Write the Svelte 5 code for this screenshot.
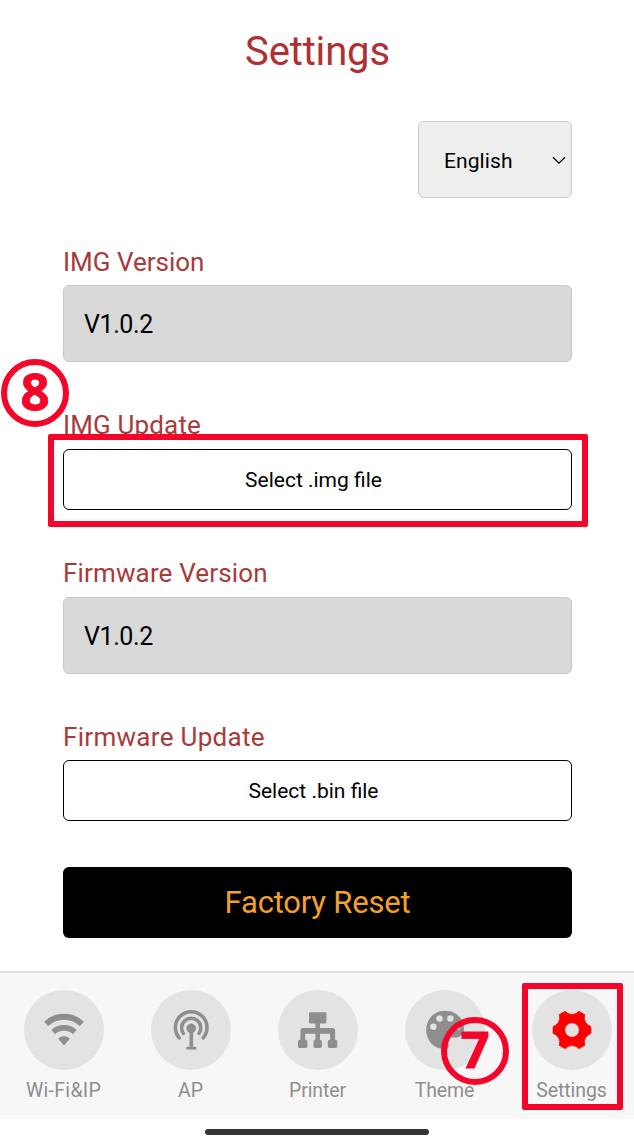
<script>
  const sections = [
    { kind: 'version', label: 'IMG Version', text: 'V1.0.2' },
    { kind: 'update', label: 'IMG Update', text: 'Select .img file' },
    { kind: 'version', label: 'Firmware Version', text: 'V1.0.2' },
    { kind: 'update', label: 'Firmware Update', text: 'Select .bin file' }
  ];
  const tabs = [
    { id: 'wifi', label: 'Wi-Fi&IP' },
    { id: 'ap', label: 'AP' },
    { id: 'printer', label: 'Printer' },
    { id: 'theme', label: 'Theme' },
    { id: 'settings', label: 'Settings' }
  ];
</script>

<div class="screen">
  <main>
    <h1>Settings</h1>
    <button class="language">
      <span>English</span>
      <svg width="14" height="9" viewBox="0 0 14 9"><path d="M1 1.2 7 7.2 13 1.2" fill="none" stroke="#000" stroke-width="1.3" /></svg>
    </button>

    {#each sections as s}
      <section class={s.kind}>
        <h2>{s.label}</h2>
        {#if s.kind === 'version'}
          <div class="value">{s.text}</div>
        {:else}
          <button class="file">{s.text}</button>
        {/if}
      </section>
    {/each}

    <button class="reset">Factory Reset</button>
  </main>

  <nav>
    {#each tabs as tab}
      <div class="tab">
        <div class="disc">
          <svg width="80" height="80" viewBox="0 0 80 80" fill="#8e8e8e">
            {#if tab.id === 'wifi'}
              <g fill="none" stroke="#8e8e8e">
                <path d="M22.1 33.9A25.7 25.7 0 0 1 57.9 33.9" stroke-width="6" />
                <path d="M29.2 42A15.8 15.8 0 0 1 50.8 42" stroke-width="5.6" />
              </g>
              <path d="M40 55.4 34 48.6Q40 43.8 46 48.6Z" />
            {:else if tab.id === 'ap'}
              <g fill="none" stroke="#8e8e8e" stroke-width="3.5" stroke-linecap="round">
                <path d="M28.2 47.8A15.8 15.8 0 1 1 52.2 47.8" />
                <path d="M32.4 43.4A9.6 9.6 0 1 1 48 43.4" />
              </g>
              <circle cx="40.2" cy="38.3" r="4.8" />
              <path d="M38.5 40h3.6v16.8h-3.6z" />
              <rect x="35.3" y="56.8" width="10" height="2.8" rx=".6" />
            {:else if tab.id === 'printer'}
              <rect x="31" y="22.2" width="17.4" height="11.2" rx="1.3" />
              <path d="M37.4 32h4.6v6h12.5q2.6 0 2.6 2.6V51h-5V43.8H42V51h-4.6V43.8H27.2V51h-4.8V40.6q0-2.6 2.6-2.6h12.4z" />
              <rect x="20" y="49.8" width="9.4" height="8.2" rx="1.8" />
              <rect x="35.5" y="49.8" width="8.4" height="8.2" rx="1.8" />
              <rect x="49.8" y="49.8" width="9.4" height="8.2" rx="1.8" />
            {:else if tab.id === 'theme'}
              <path d="M40 20.8c-10.8 0-18.8 8.4-18.8 19.2S29.2 59.2 40 59.2c2.2 0 3.8-1.5 3.8-3.4 0-2.3-1.8-3-1.8-5 0-2 1.4-3.2 3.6-3.2h4.6c5 0 8.8-3.5 8.8-9.2C59 28.6 51 20.8 40 20.8z" />
              <g fill="#e3e3e3">
                <circle cx="28.4" cy="36.8" r="3.2" /><circle cx="34.5" cy="28.5" r="3.2" />
                <circle cx="45.4" cy="28.5" r="3.2" /><circle cx="52" cy="36.8" r="3.2" />
              </g>
            {:else}
              <path fill="#fc0000" fill-rule="evenodd" d="M33.2 21.3Q35.5 24.4 40 24.4Q44.5 24.4 46.8 21.3L52.8 24.7Q51.3 28.8 53.5 32.3Q55.4 35.6 58.9 36.6V43.4Q55.4 44.4 53.5 47.7Q51.3 51.2 52.8 55.3L46.8 58.7Q44.5 55.6 40 55.6Q35.5 55.6 33.2 58.7L27.2 55.3Q28.7 51.2 26.5 47.7Q24.6 44.4 21.1 43.4V36.6Q24.6 35.6 26.5 32.3Q28.7 28.8 27.2 24.7ZM40 32.7a7.3 7.3 0 1 0 0 14.6a7.3 7.3 0 1 0 0-14.6z" stroke="#fc0000" stroke-width=".8" stroke-linejoin="round" />
            {/if}
          </svg>
        </div>
        <span>{tab.label}</span>
      </div>
    {/each}
  </nav>
  <footer><i></i></footer>

  <div class="frame frame-file"></div>
  <div class="frame frame-tab"></div>
  <div class="step step-eight">8</div>
  <div class="step step-seven">7</div>
</div>

<style>
  :global(body) { margin: 0; background: #fff; }
  * { box-sizing: border-box; }
  .screen {
    position: relative; width: 634px; height: 1144px; overflow: hidden;
    display: flex; flex-direction: column; background: #fff; color: #000;
    font-family: Roboto, "Noto Sans", sans-serif;
  }
  main { height: 971px; flex: none; padding: 29px 62px 0 63px; display: flex; flex-direction: column; }
  h1 {
    margin: 0; height: 46px; line-height: 46px; text-align: center;
    font-size: 40px; font-weight: 400; color: #b03032; letter-spacing: -0.15px;
  }
  button { font: inherit; color: inherit; padding: 0; margin: 0; }
  .language {
    align-self: flex-end; width: 154px; height: 77px; margin: 46px 0 49px; padding: 1px 5px 0 25px;
    display: flex; align-items: center; justify-content: space-between;
    background: #eee; border: 1px solid #cacaca; border-radius: 6px;
    font-size: 21px; letter-spacing: 0.1px;
  }
  .language span { padding-top: 1px; }
  h2 {
    margin: 0 0 8px; height: 30px; line-height: 29px; font-size: 26px; font-weight: 400;
    color: #a83a3b; letter-spacing: 0.15px;
  }
  section:nth-of-type(1) h2 { letter-spacing: 0; line-height: 31px; }
  section:nth-of-type(4) h2 { letter-spacing: 0.3px; line-height: 31px; }
  .version { margin-bottom: 49px; }
  .value {
    height: 77px; padding-left: 20px; line-height: 77px; font-size: 25px; letter-spacing: -0.4px;
    background: #d9d9d9; border: 1px solid #c9c9c9; border-radius: 6px;
  }
  .update { margin-bottom: 49px; }
  section:nth-of-type(4) { margin-top: -1px; }
  .file {
    display: block; width: 100%; height: 61px; padding-right: 8px; background: #fff;
    border: 1.3px solid #000; border-radius: 6px; font-size: 21px; letter-spacing: 0;
  }
  .reset {
    flex: none; height: 71px; margin-top: -3px; background: #000; color: #f4a02c;
    border: 0; border-radius: 6px; font-size: 31px; letter-spacing: -0.2px;
  }
  nav {
    flex: none; height: 148px; padding-top: 17px; display: grid; grid-template-columns: repeat(5, 127px);
    background: #f7f7f7; border-top: 2px solid #e1e1e1;
  }
  .tab { display: flex; flex-direction: column; align-items: center; gap: 9px; }
  .disc { width: 80px; height: 80px; border-radius: 50%; background: #e3e3e3; }
  .disc svg { display: block; }
  .tab span { line-height: 24px; font-size: 19.5px; color: #8e8e8e; letter-spacing: -0.1px; }
  .tab:first-child span { letter-spacing: 0.3px; }
  footer { height: 25px; padding-top: 10px; display: flex; justify-content: center; }
  footer i { width: 224px; height: 6px; border-radius: 3px; background: #333; }
  .frame { position: absolute; border: 6px solid #f30629; border-radius: 2px; }
  .frame-file { left: 48px; top: 434px; width: 540px; height: 93px; }
  .frame-tab { left: 522px; top: 983px; width: 101px; height: 127px; }
  .step {
    position: absolute; width: 68px; height: 68px; border: 6px solid #f30629; border-radius: 50%;
    color: #f30629; font: 700 51px/51px "Noto Sans", sans-serif; text-align: center;
    -webkit-text-stroke: 0.8px #f30629;
  }
  .step-eight { left: 1px; top: 359px; }
  .step-seven { left: 441px; top: 1017px; }
</style>
